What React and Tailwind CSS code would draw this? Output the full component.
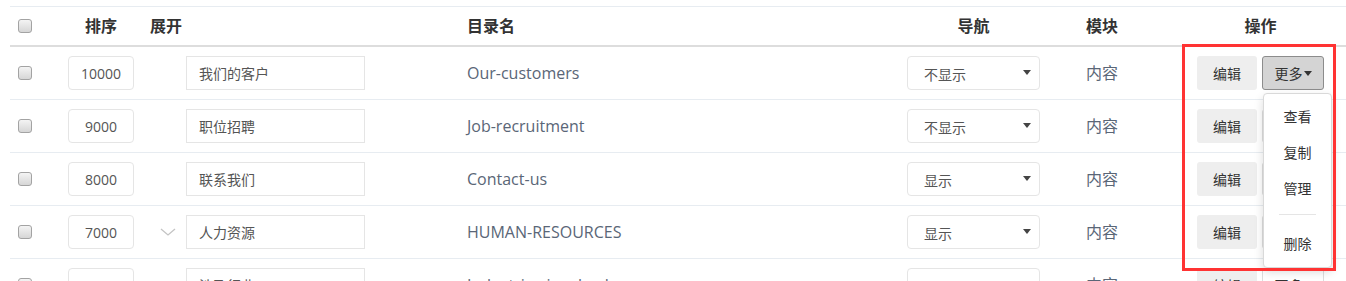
import { useState } from "react";

const rows = [
    { sort: "10000", name: "我们的客户", en: "Our-customers", nav: "不显示" },
    { sort: "9000", name: "职位招聘", en: "Job-recruitment", nav: "不显示" },
    { sort: "8000", name: "联系我们", en: "Contact-us", nav: "显示" },
    { sort: "7000", name: "人力资源", en: "HUMAN-RESOURCES", nav: "显示", sub: true },
    { sort: "6000", name: "涉及行业", en: "Industries-involved", nav: "显示" },
];

function Checkbox() {
    return <span className="block h-[14px] w-[14px] rounded-[3px] border border-[#a3a3a3] bg-linear-to-b from-[#f4f4f4] to-[#d6d6d6]" />;
}

function Caret({ dark }) {
    return (
        <span
            className={`inline-block h-0 w-0 border-x-[4px] border-t-[5px] border-x-transparent ${
                dark ? "border-t-[#333]" : "border-t-[#444]"
            }`}
        />
    );
}

function Row({ row, open }) {
    return (
        <div className="flex h-[53px] items-center border-b border-[#e7ecf1]">
            <div className="w-[58px] pl-[8px]">
                <Checkbox />
            </div>
            <div className="w-[82px]">
                <div className="flex h-[34px] w-[66px] items-center justify-center rounded-[4px] border border-[#e5e5e5] text-[14px] text-[#555]">
                    {row.sort}
                </div>
            </div>
            <div className="flex w-[36px] items-center pl-[10px]">
                {row.sub && (
                    <svg width="16" height="10" viewBox="0 0 16 10" fill="none">
                        <polyline points="1,2 8,8 15,2" stroke="#c4c4c4" strokeWidth="1.3" />
                    </svg>
                )}
            </div>
            <div className="w-[281px]">
                <div className="flex h-[34px] w-[179px] items-center border border-[#e5e5e5] pl-[12px] text-[14px] text-[#555]">
                    {row.name}
                </div>
            </div>
            <div className="w-[440px] text-[16px] text-[#5a6677]">{row.en}</div>
            <div className="w-[179px]">
                <div className="flex h-[34px] w-[133px] items-center justify-between rounded-[4px] border border-[#e5e5e5] pl-[16px] pr-[8px] text-[14px] text-[#555]">
                    <span className="pt-[3px]">{row.nav}</span>
                    <span className="-mt-[2px] flex">
                        <Caret />
                    </span>
                </div>
            </div>
            <div className="w-[111px] text-[16px] text-[#5a6677]">内容</div>
            <div className="flex items-center gap-[5px]">
                <button className="h-[34px] w-[60px] rounded-[3px] bg-[#eeeeee] text-[14px] text-[#333]">编辑</button>
                <div className="relative">
                    <button
                        className={`flex h-[34px] w-[62px] items-center justify-center gap-[1px] rounded-[3px] border text-[14px] text-[#333] ${
                            open ? "border-[#8c8c8c] bg-[#d4d4d4]" : "border-[#dddddd] bg-white"
                        }`}
                    >
                        更多
                        <Caret dark />
                    </button>
                    {open && (
                        <div className="absolute left-[1px] top-full z-10 mt-[3px] w-[69px] rounded-[4px] border border-[#d9d9d9] bg-white pb-[6px] pt-[4px] text-[14px] text-[#333] shadow-[0_4px_10px_rgba(0,0,0,0.15)]">
                            <div className="flex h-[36px] items-center justify-center">查看</div>
                            <div className="flex h-[36px] items-center justify-center">复制</div>
                            <div className="flex h-[36px] items-center justify-center">管理</div>
                            <div className="mx-[15px] mb-[10px] mt-[8px] h-px bg-[#e5e5e5]" />
                            <div className="flex h-[36px] items-center justify-center">删除</div>
                        </div>
                    )}
                </div>
            </div>
        </div>
    );
}

export default function App() {
    const [openRow] = useState(0);

    return (
        <div
            className="relative h-[281px] overflow-hidden bg-white pl-[10px]"
            style={{ fontFamily: '"Open Sans", "Noto Sans CJK SC", sans-serif' }}
        >
            <div className="mt-[6px] border-t border-[#e7ecf1]">
                <div className="flex h-[40px] items-center border-b-2 border-[#dddddd] text-[16px] font-bold text-[#333]">
                    <div className="w-[58px] pl-[8px]">
                        <Checkbox />
                    </div>
                    <div className="w-[82px]">
                        <div className="w-[66px] text-center">排序</div>
                    </div>
                    <div className="w-[317px]">展开</div>
                    <div className="w-[440px]">目录名</div>
                    <div className="w-[179px]">
                        <div className="w-[133px] text-center">导航</div>
                    </div>
                    <div className="w-[111px]">模块</div>
                    <div className="w-[127px] text-center">操作</div>
                </div>
                {rows.map((row, i) => (
                    <Row key={row.sort} row={row} open={i === openRow} />
                ))}
            </div>
            {/* annotation box round the operations column */}
            <div className="pointer-events-none absolute left-[1182px] top-[44px] z-20 h-[227px] w-[154px] border-[3px] border-[#ff3333]" />
        </div>
    );
}
